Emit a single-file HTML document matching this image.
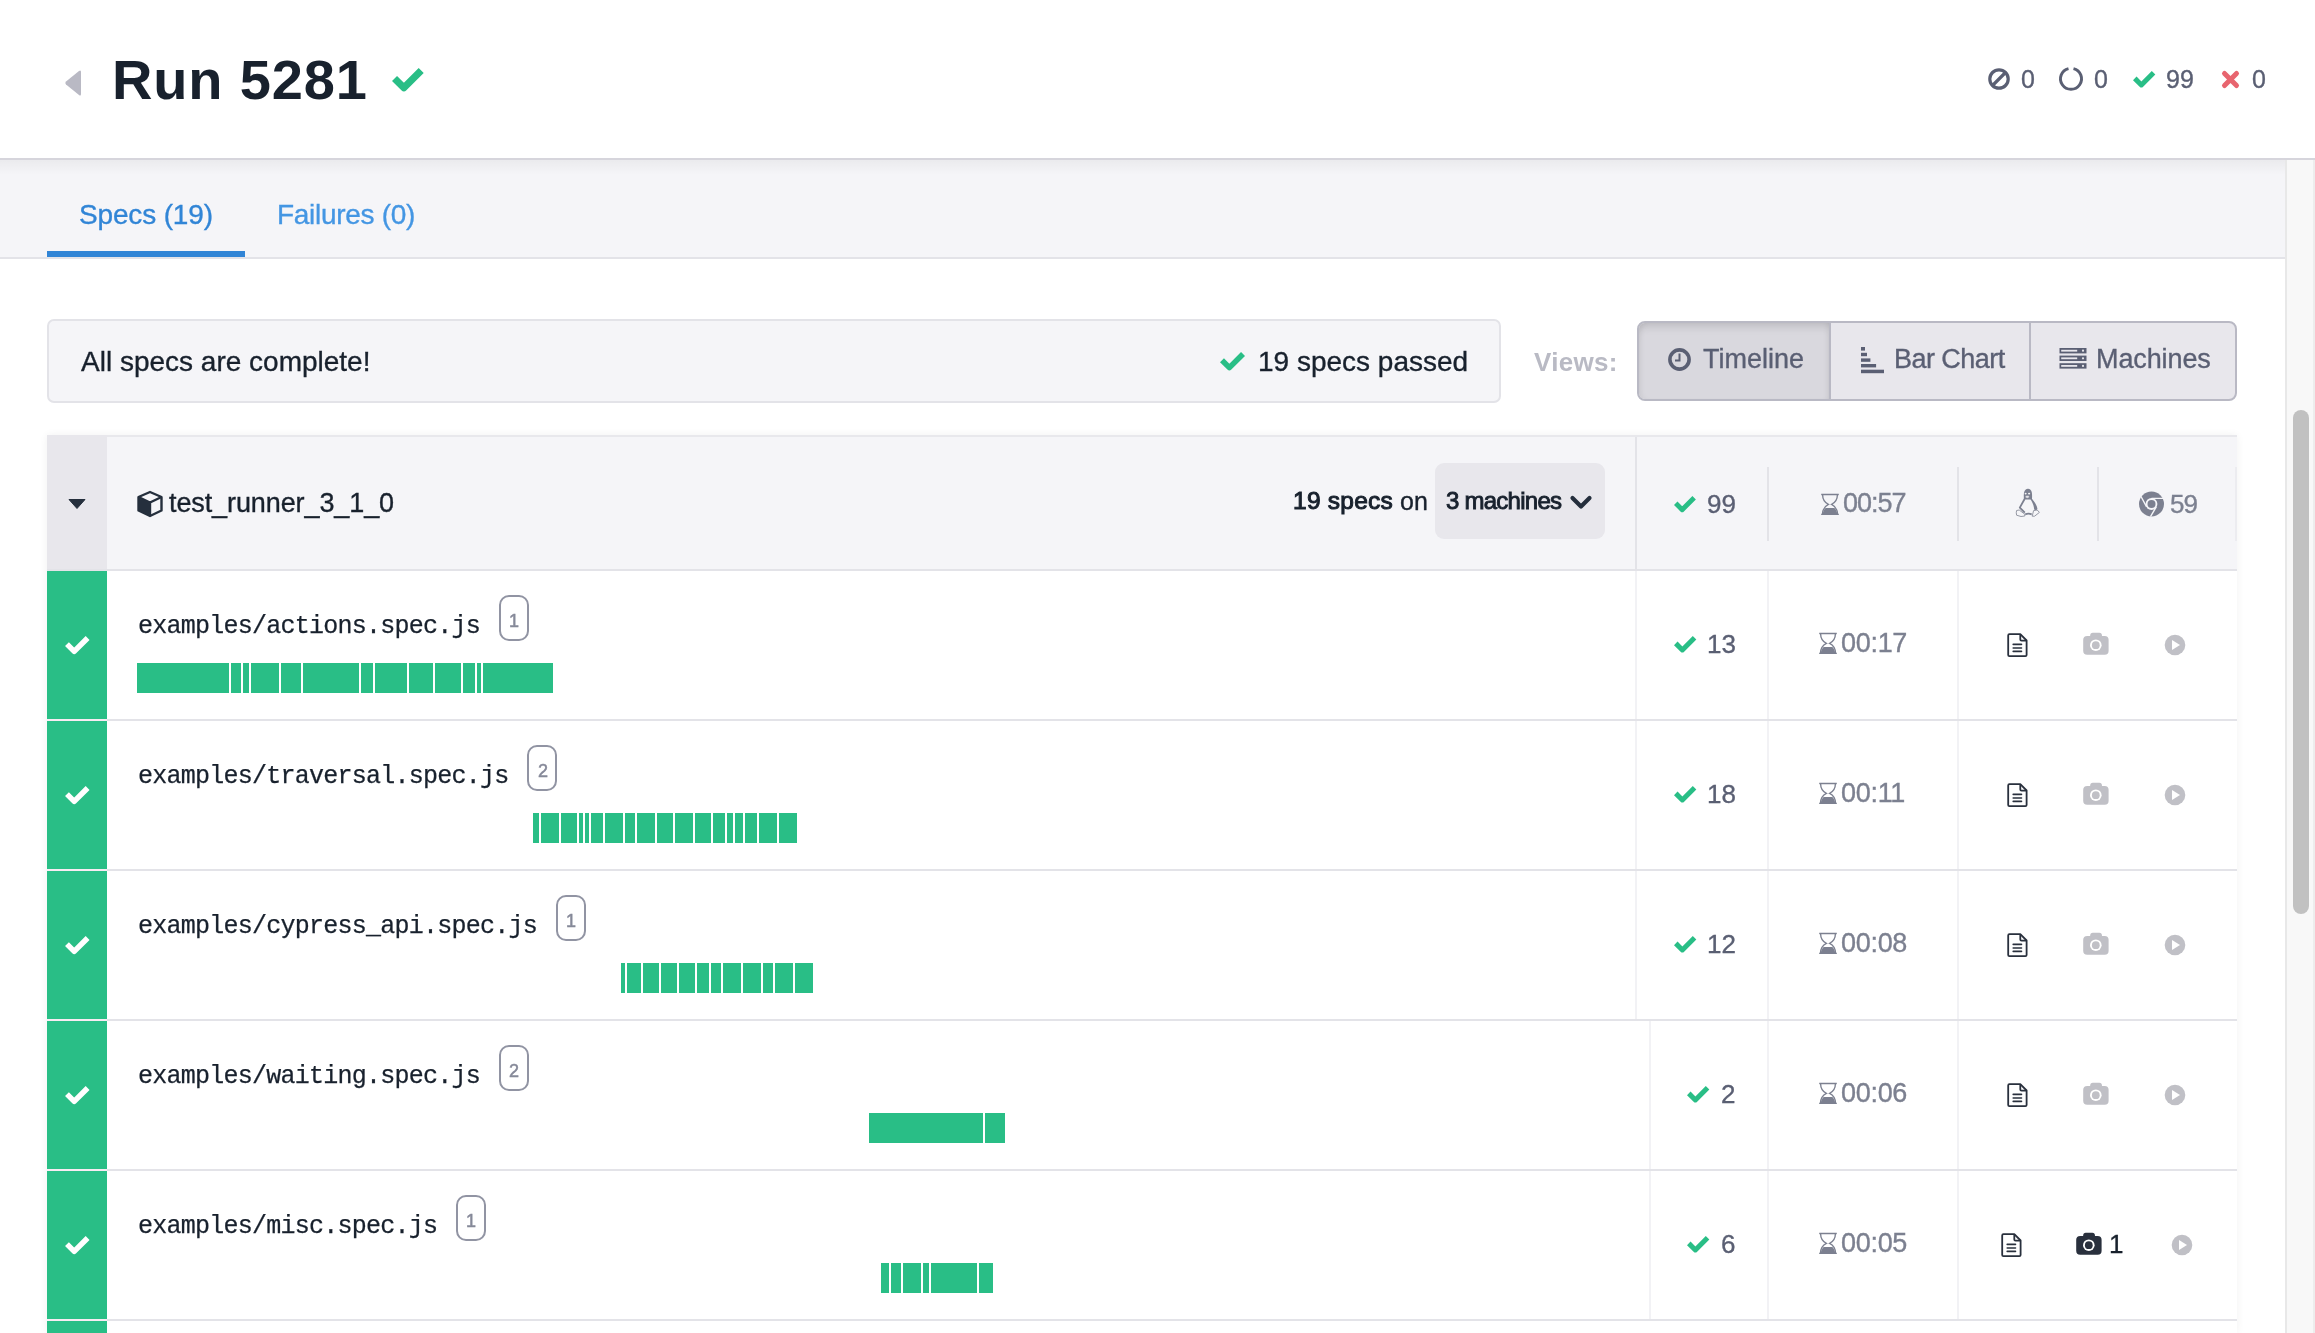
<!DOCTYPE html>
<html><head><meta charset="utf-8"><title>Run 5281</title>
<style>
html,body{margin:0;padding:0;width:2315px;height:1333px;overflow:hidden;background:#fff;}
.a{position:absolute;}
svg.a{overflow:visible;}
.t{position:absolute;white-space:nowrap;line-height:1;will-change:transform;}
.s{font-family:"Liberation Sans", sans-serif;font-weight:400;-webkit-text-stroke:0.35px currentColor;}
.b{font-family:"Liberation Sans", sans-serif;font-weight:700;}
.m{font-family:"Liberation Mono", monospace;font-weight:400;-webkit-text-stroke:0.25px currentColor;}
.badge{border:2px solid #9194a3;border-radius:10px;box-sizing:border-box;}
</style></head><body>
<div class="a" style="left:0px;top:0px;width:2315px;height:158px;background:#fff"></div>
<div class="a" style="left:0px;top:158px;width:2315px;height:2px;background:#d6d5dc"></div>
<svg class="a" style="left:62px;top:66px" width="22" height="34" viewBox="0 0 22 34"><path d="M17 5 Q19 3.5 19 6 L19 28 Q19 30.5 17 29 L4 18.5 Q2.5 17 4 15.5 Z" fill="#b9b9c4"/></svg>
<div class="t b" style="left:112.0px;top:52.4px;font-size:56px;color:#18212d;letter-spacing:0.85px;">Run 5281</div>
<svg class="a" style="left:392px;top:68px" width="32.66" height="24.14" viewBox="0 0 23 17"><path d="M1.77 7.37 L8.37 13.97 L20.57 1.77" fill="none" stroke="#29be86" stroke-width="5" stroke-linecap="butt" stroke-linejoin="round"/></svg>
<svg class="a" style="left:1987px;top:67px" width="24" height="24" viewBox="0 0 24 24"><circle cx="12" cy="12" r="9.2" fill="none" stroke="#5a5f73" stroke-width="3.2"/><path d="M5.5 18.5 L18.5 5.5" stroke="#5a5f73" stroke-width="3.2"/></svg>
<div class="t s" style="left:2020.5px;top:66.8px;font-size:25px;color:#5a5f73;">0</div>
<svg class="a" style="left:2058px;top:66px" width="26" height="26" viewBox="0 0 26 26"><path d="M10.5 2.6 A10.5 10.5 0 1 0 15.5 2.6" fill="none" stroke="#5a5f73" stroke-width="3"/></svg>
<div class="t s" style="left:2093.5px;top:66.8px;font-size:25px;color:#5a5f73;">0</div>
<svg class="a" style="left:2133px;top:71px" width="23.00" height="17.00" viewBox="0 0 23 17"><path d="M1.77 7.37 L8.37 13.97 L20.57 1.77" fill="none" stroke="#29be86" stroke-width="5" stroke-linecap="butt" stroke-linejoin="round"/></svg>
<div class="t s" style="left:2165.5px;top:66.8px;font-size:25px;color:#5a5f73;">99</div>
<svg class="a" style="left:2221px;top:70px" width="19" height="19" viewBox="0 0 19 19"><path d="M3.5 3.5 L15.5 15.5 M15.5 3.5 L3.5 15.5" stroke="#e8656f" stroke-width="5" stroke-linecap="round"/></svg>
<div class="t s" style="left:2252.0px;top:66.8px;font-size:25px;color:#5a5f73;">0</div>
<div class="a" style="left:0px;top:160px;width:2285px;height:97px;background:#f5f5f8"></div>
<div class="a" style="left:0px;top:160px;width:2285px;height:15px;background:linear-gradient(rgba(0,0,0,0.045),rgba(0,0,0,0))"></div>
<div class="a" style="left:0px;top:257px;width:2285px;height:2px;background:#e3e3e8"></div>
<div class="a" style="left:47px;top:251px;width:198px;height:6px;background:#3185d6"></div>
<div class="t s" style="left:78.5px;top:201.2px;font-size:28px;color:#3185d6;letter-spacing:-0.15px;">Specs (19)</div>
<div class="t s" style="left:277.0px;top:201.2px;font-size:28px;color:#4496e3;letter-spacing:-0.3px;">Failures (0)</div>
<div class="a" style="left:2285px;top:160px;width:2px;height:1173px;background:#e8e8e8"></div>
<div class="a" style="left:2287px;top:160px;width:26px;height:1173px;background:#f8f8f8"></div>
<div class="a" style="left:2313px;top:160px;width:2px;height:1173px;background:#ededed"></div>
<div class="a" style="left:2293px;top:410px;width:16px;height:504px;background:#c1c1c1;border-radius:8px"></div>
<div class="a" style="left:47px;top:319px;width:1454px;height:84px;background:#f5f5f8;border:2px solid #e3e3e8;border-radius:7px;box-sizing:border-box"></div>
<div class="t s" style="left:81.0px;top:348.3px;font-size:28px;color:#18212d;">All specs are complete!</div>
<svg class="a" style="left:1220px;top:352px" width="25.76" height="19.04" viewBox="0 0 23 17"><path d="M1.77 7.37 L8.37 13.97 L20.57 1.77" fill="none" stroke="#29be86" stroke-width="5" stroke-linecap="butt" stroke-linejoin="round"/></svg>
<div class="t s" style="left:1258.0px;top:347.7px;font-size:28px;color:#18212d;">19 specs passed</div>
<div class="t b" style="left:1534.0px;top:349.0px;font-size:26px;color:#b9bac4;letter-spacing:0.3px;">Views:</div>
<div class="a" style="left:1637px;top:321px;width:600px;height:80px;background:#e8e7ec;border:2px solid #b9b9c4;border-radius:8px;box-sizing:border-box"></div>
<div class="a" style="left:1639px;top:323px;width:190px;height:76px;background:#d9d8de;border-radius:6px 0 0 6px;box-shadow:inset 0 8px 10px -5px rgba(0,0,0,0.14), inset 5px 0 7px -5px rgba(0,0,0,0.09), inset -5px 0 7px -5px rgba(0,0,0,0.09)"></div>
<div class="a" style="left:1829px;top:323px;width:2px;height:76px;background:#b9b9c4"></div>
<div class="a" style="left:2029px;top:323px;width:2px;height:76px;background:#b9b9c4"></div>
<svg class="a" style="left:1667px;top:347px" width="25" height="25" viewBox="0 0 25 25"><circle cx="12.5" cy="12.5" r="9.6" fill="none" stroke="#5a5f73" stroke-width="3.6"/><path d="M12.5 6.5 V13.5 H8" fill="none" stroke="#5a5f73" stroke-width="2"/></svg>
<div class="t s" style="left:1703.0px;top:346.1px;font-size:27px;color:#5a5f73;">Timeline</div>
<svg class="a" style="left:1860px;top:346px" width="25" height="28" viewBox="0 0 25 28"><g fill="#5a5f73"><rect x="1" y="1" width="4" height="3.6"/><rect x="1" y="6.8" width="6" height="3.4"/><rect x="1" y="12.4" width="9.4" height="3.4"/><rect x="1" y="18" width="15.1" height="3.4"/><rect x="1" y="23.7" width="23" height="3.5"/></g></svg>
<div class="t s" style="left:1894.0px;top:346.1px;font-size:27px;color:#5a5f73;letter-spacing:-0.55px;">Bar Chart</div>
<svg class="a" style="left:2059px;top:347px" width="28" height="23" viewBox="0 0 28 23"><g fill="#5a5f73"><rect x="0.5" y="1" width="27" height="5.4"/><rect x="0.5" y="8.6" width="27" height="5.4"/><rect x="0.5" y="16.2" width="27" height="5.4"/></g><g fill="#e8e7ec"><rect x="2.2" y="2.8" width="16" height="1.8"/><rect x="2.2" y="10.4" width="16" height="1.8"/><rect x="2.2" y="18" width="16" height="1.8"/><circle cx="24" cy="3.7" r="1.1"/><circle cx="24" cy="11.3" r="1.1"/><circle cx="24" cy="18.9" r="1.1"/></g></svg>
<div class="t s" style="left:2096.0px;top:346.1px;font-size:27px;color:#5a5f73;letter-spacing:-0.1px;">Machines</div>
<div class="a" style="left:47px;top:435px;width:2190px;height:898px;background:#fff;box-shadow:0 0 8px rgba(0,0,0,0.06)"></div>
<div class="a" style="left:47px;top:435px;width:2190px;height:136px;background:#f5f5f8"></div>
<div class="a" style="left:107px;top:435px;width:2130px;height:2px;background:#e8e8ec"></div>
<div class="a" style="left:47px;top:569px;width:2190px;height:2px;background:#e3e3e8"></div>
<div class="a" style="left:47px;top:435px;width:60px;height:134px;background:#e8e7ec"></div>
<svg class="a" style="left:68px;top:498px" width="18" height="12" viewBox="0 0 18 12"><path d="M1 1.5 H17 L9 10.5 Z" fill="#252f3d" stroke="#252f3d" stroke-width="1" stroke-linejoin="round"/></svg>
<svg class="a" style="left:136px;top:490px" width="28" height="28" viewBox="0 0 28 28"><path d="M14 2 L25.5 7 V20.5 L14 26 L2.5 20.5 V7 Z" fill="none" stroke="#252f3d" stroke-width="2.4" stroke-linejoin="round"/><path d="M2.5 7 L14 12.5 L25.5 7 M14 12.5 V26" fill="none" stroke="#252f3d" stroke-width="2.4"/><path d="M2.5 7 L14 12.5 V26 L2.5 20.5 Z" fill="#252f3d"/></svg>
<div class="t s" style="left:169.0px;top:490.1px;font-size:27px;color:#18212d;letter-spacing:-0.1px;">test_runner_3_1_0</div>
<div class="t s" style="left:1292.5px;top:489.0px;font-size:24.5px;color:#18212d;letter-spacing:0.25px;-webkit-text-stroke:1.0px #18212d;">19 specs</div>
<div class="t s" style="left:1399.5px;top:488.5px;font-size:25px;color:#18212d;">on</div>
<div class="a" style="left:1435px;top:463px;width:170px;height:76px;background:#e8e7ec;border-radius:9px"></div>
<div class="t s" style="left:1446.0px;top:489.4px;font-size:24px;color:#18212d;letter-spacing:-0.75px;-webkit-text-stroke:0.9px #18212d;">3 machines</div>
<svg class="a" style="left:1569px;top:494px" width="24" height="17" viewBox="0 0 24 17"><path d="M3.5 4 L12 12.5 L20.5 4" fill="none" stroke="#252f3d" stroke-width="4.2" stroke-linecap="round" stroke-linejoin="round"/></svg>
<div class="a" style="left:1635px;top:437px;width:2px;height:132px;background:#e3e3e8"></div>
<svg class="a" style="left:1674px;top:496px" width="22.54" height="16.66" viewBox="0 0 23 17"><path d="M1.77 7.37 L8.37 13.97 L20.57 1.77" fill="none" stroke="#29be86" stroke-width="5" stroke-linecap="butt" stroke-linejoin="round"/></svg>
<div class="t s" style="left:1706.5px;top:491.0px;font-size:26px;color:#5a5f73;">99</div>
<div class="a" style="left:1767px;top:467px;width:2px;height:74px;background:#e3e3e8"></div>
<svg class="a" style="left:1814px;top:488.5px" width="32" height="32" viewBox="0 0 32 32"><path d="M7.2 5.5 H24.8 M7.2 25.4 H24.8" stroke="#7c8090" stroke-width="1.4"/><path d="M8.6 5.8 C8.6 11 10.8 13.6 14.4 15.4 C10.8 17.2 8.6 20 8.4 25.4 M23.4 5.8 C23.4 11 21.2 13.6 17.6 15.4 C21.2 17.2 23.4 20 23.6 25.4" fill="none" stroke="#7c8090" stroke-width="1.35" stroke-linejoin="miter"/><path d="M8.8 25.4 C9 22.4 10 20.4 11.6 18.9 H20.4 C22 20.4 23 22.4 23.2 25.4 Z" fill="#7c8090"/></svg>
<div class="t s" style="left:1842.5px;top:490.1px;font-size:27px;color:#7c8090;letter-spacing:-1.0px;">00:57</div>
<div class="a" style="left:1957px;top:467px;width:2px;height:74px;background:#e3e3e8"></div>
<svg class="a" style="left:2010px;top:485px" width="36" height="36" viewBox="0 0 36 36"><path d="M14 14.5 C13.4 9 13.8 3.8 18 3.8 C22.2 3.8 22.4 9 21.9 14.5 Z" fill="#7c8090"/><ellipse cx="15.6" cy="8.6" rx="1" ry="0.9" fill="#f5f5f8"/><ellipse cx="19.1" cy="8.6" rx="1.1" ry="0.9" fill="#f5f5f8"/><ellipse cx="17.3" cy="11.8" rx="2.1" ry="1.4" fill="#e3e3e8" stroke="#7c8090" stroke-width="0.5"/><path d="M14.6 14 L9.8 22.6 L14.8 27.6" fill="none" stroke="#7c8090" stroke-width="1.8" stroke-linejoin="round"/><path d="M21 12.8 C24 16 27 20 27.4 23.5 C27.4 25.3 25.5 25.5 24.2 24.6 C23.8 20 22.3 17 20.6 14.4 Z" fill="#7c8090"/><path d="M15.2 29.3 Q18.5 28.1 21.7 29.3" fill="none" stroke="#7c8090" stroke-width="1.8"/><path d="M14.8 31 L11 31.5 L6.6 30.2 Q5.9 27.6 6.6 25.5 L9.2 25 L14.8 29.2 Z M22.2 31.2 L24.6 31.2 L29.4 27.4 L27.2 25 L23.6 25.6 Z" fill="none" stroke="#8a8d9b" stroke-width="0.9" stroke-linejoin="round"/></svg>
<div class="a" style="left:2097px;top:467px;width:2px;height:74px;background:#e3e3e8"></div>
<svg class="a" style="left:2138px;top:490px" width="27" height="28" viewBox="0 0 27 28"><circle cx="13.5" cy="14" r="12.5" fill="#7c8090"/><circle cx="13.5" cy="14" r="5.9" fill="#f5f5f8"/><circle cx="13.5" cy="14" r="4.0" fill="#7c8090"/><path d="M13.5 8.4 H25 M8.6 16.8 L3 6.5 M18.3 16.8 L12.5 26.6" stroke="#f5f5f8" stroke-width="1.4"/></svg>
<div class="t s" style="left:2169.5px;top:491.0px;font-size:26px;color:#7c8090;letter-spacing:-1.0px;">59</div>
<div class="a" style="left:2235px;top:467px;width:2px;height:74px;background:#ececf0"></div>
<div class="a" style="left:47px;top:571px;width:60px;height:148px;background:#29be86"></div>
<div class="a" style="left:47px;top:719px;width:60px;height:2px;background:#f8ecf3"></div>
<div class="a" style="left:107px;top:719px;width:2130px;height:2px;background:#e3e3e8"></div>
<svg class="a" style="left:65px;top:636px" width="25.30" height="18.70" viewBox="0 0 23 17"><path d="M1.77 7.37 L8.37 13.97 L20.57 1.77" fill="none" stroke="#fff" stroke-width="5" stroke-linecap="butt" stroke-linejoin="round"/></svg>
<div class="t m" style="left:137.5px;top:614.2px;font-size:25px;color:#18212d;letter-spacing:-0.75px;">examples/actions.spec.js</div>
<div class="a badge" style="left:498.5px;top:595px;width:30px;height:46px;"></div>
<div class="t s" style="left:509.0px;top:611.8px;font-size:18px;color:#868999;-webkit-text-stroke:0.5px #868999;">1</div>
<div class="a" style="left:137px;top:663px;width:92px;height:30px;background:#29be86"></div>
<div class="a" style="left:231px;top:663px;width:10px;height:30px;background:#29be86"></div>
<div class="a" style="left:243px;top:663px;width:6px;height:30px;background:#29be86"></div>
<div class="a" style="left:251px;top:663px;width:28px;height:30px;background:#29be86"></div>
<div class="a" style="left:281px;top:663px;width:20px;height:30px;background:#29be86"></div>
<div class="a" style="left:303px;top:663px;width:56px;height:30px;background:#29be86"></div>
<div class="a" style="left:361px;top:663px;width:12px;height:30px;background:#29be86"></div>
<div class="a" style="left:375px;top:663px;width:32px;height:30px;background:#29be86"></div>
<div class="a" style="left:409px;top:663px;width:24px;height:30px;background:#29be86"></div>
<div class="a" style="left:435px;top:663px;width:26px;height:30px;background:#29be86"></div>
<div class="a" style="left:463px;top:663px;width:12px;height:30px;background:#29be86"></div>
<div class="a" style="left:477px;top:663px;width:4px;height:30px;background:#29be86"></div>
<div class="a" style="left:483px;top:663px;width:70px;height:30px;background:#29be86"></div>
<div class="a" style="left:1635px;top:571px;width:2px;height:148px;background:#f2f2f5"></div>
<div class="a" style="left:1767px;top:571px;width:2px;height:148px;background:#f2f2f5"></div>
<div class="a" style="left:1957px;top:571px;width:2px;height:148px;background:#f2f2f5"></div>
<div class="t s" style="right:579.5px;top:631.0px;font-size:26px;color:#5a5f73">13</div>
<svg class="a" style="left:1674px;top:636px" width="23.00" height="17.00" viewBox="0 0 23 17"><path d="M1.77 7.37 L8.37 13.97 L20.57 1.77" fill="none" stroke="#29be86" stroke-width="5" stroke-linecap="butt" stroke-linejoin="round"/></svg>
<svg class="a" style="left:1812px;top:628px" width="32" height="32" viewBox="0 0 32 32"><path d="M7.2 5.5 H24.8 M7.2 25.4 H24.8" stroke="#7c8090" stroke-width="1.4"/><path d="M8.6 5.8 C8.6 11 10.8 13.6 14.4 15.4 C10.8 17.2 8.6 20 8.4 25.4 M23.4 5.8 C23.4 11 21.2 13.6 17.6 15.4 C21.2 17.2 23.4 20 23.6 25.4" fill="none" stroke="#7c8090" stroke-width="1.35" stroke-linejoin="miter"/><path d="M8.8 25.4 C9 22.4 10 20.4 11.6 18.9 H20.4 C22 20.4 23 22.4 23.2 25.4 Z" fill="#7c8090"/></svg>
<div class="t s" style="left:1840.5px;top:630.1px;font-size:27px;color:#7c8090;letter-spacing:-0.3px;">00:17</div>
<svg class="a" style="left:2006px;top:632px" width="23" height="27" viewBox="0 0 23 27"><path d="M2.2 3.4 Q2.2 2.2 3.4 2.2 H14.3 L20.6 8.5 V23 Q20.6 24.2 19.4 24.2 H3.4 Q2.2 24.2 2.2 23 Z" fill="none" stroke="#29303d" stroke-width="1.8" stroke-linejoin="round"/><path d="M14.3 2.4 V7.5 Q14.3 8.7 15.5 8.7 H20.4" fill="none" stroke="#29303d" stroke-width="1.8"/><path d="M7.2 12.4 H15.5 M7.2 16 H15.5 M7.2 19.4 H15.5" stroke="#29303d" stroke-width="1.6" stroke-linecap="round"/></svg>
<svg class="a" style="left:2083px;top:632px" width="26" height="23" viewBox="0 0 26 23"><path d="M7.2 4.5 V3.3 Q7.2 0.8 9.7 0.8 H16.4 Q18.9 0.8 18.9 3.3 V4.5 Z" fill="#c0c0c6"/><rect x="0.2" y="4" width="25.4" height="18.8" rx="4" fill="#c0c0c6"/><circle cx="12.8" cy="13.2" r="5.8" fill="#fff"/><circle cx="12.8" cy="13.2" r="3.9" fill="#c0c0c6"/></svg>
<svg class="a" style="left:2164px;top:634px" width="22" height="22" viewBox="0 0 22 22"><circle cx="11" cy="11" r="10.3" fill="#c0c0c6"/><path d="M8 6 L16 11 L8 16 Z" fill="#fff"/></svg>
<div class="a" style="left:47px;top:721px;width:60px;height:148px;background:#29be86"></div>
<div class="a" style="left:47px;top:869px;width:60px;height:2px;background:#f8ecf3"></div>
<div class="a" style="left:107px;top:869px;width:2130px;height:2px;background:#e3e3e8"></div>
<svg class="a" style="left:65px;top:786px" width="25.30" height="18.70" viewBox="0 0 23 17"><path d="M1.77 7.37 L8.37 13.97 L20.57 1.77" fill="none" stroke="#fff" stroke-width="5" stroke-linecap="butt" stroke-linejoin="round"/></svg>
<div class="t m" style="left:137.5px;top:764.2px;font-size:25px;color:#18212d;letter-spacing:-0.75px;">examples/traversal.spec.js</div>
<div class="a badge" style="left:527.0px;top:745px;width:30px;height:46px;"></div>
<div class="t s" style="left:537.5px;top:761.8px;font-size:18px;color:#868999;-webkit-text-stroke:0.5px #868999;">2</div>
<div class="a" style="left:533px;top:813px;width:6px;height:30px;background:#29be86"></div>
<div class="a" style="left:541px;top:813px;width:18px;height:30px;background:#29be86"></div>
<div class="a" style="left:561px;top:813px;width:16px;height:30px;background:#29be86"></div>
<div class="a" style="left:579px;top:813px;width:4px;height:30px;background:#29be86"></div>
<div class="a" style="left:585px;top:813px;width:4px;height:30px;background:#29be86"></div>
<div class="a" style="left:591px;top:813px;width:12px;height:30px;background:#29be86"></div>
<div class="a" style="left:605px;top:813px;width:18px;height:30px;background:#29be86"></div>
<div class="a" style="left:625px;top:813px;width:10px;height:30px;background:#29be86"></div>
<div class="a" style="left:637px;top:813px;width:18px;height:30px;background:#29be86"></div>
<div class="a" style="left:657px;top:813px;width:16px;height:30px;background:#29be86"></div>
<div class="a" style="left:675px;top:813px;width:18px;height:30px;background:#29be86"></div>
<div class="a" style="left:695px;top:813px;width:16px;height:30px;background:#29be86"></div>
<div class="a" style="left:713px;top:813px;width:12px;height:30px;background:#29be86"></div>
<div class="a" style="left:727px;top:813px;width:6px;height:30px;background:#29be86"></div>
<div class="a" style="left:735px;top:813px;width:8px;height:30px;background:#29be86"></div>
<div class="a" style="left:745px;top:813px;width:12px;height:30px;background:#29be86"></div>
<div class="a" style="left:759px;top:813px;width:18px;height:30px;background:#29be86"></div>
<div class="a" style="left:779px;top:813px;width:18px;height:30px;background:#29be86"></div>
<div class="a" style="left:1635px;top:721px;width:2px;height:148px;background:#f2f2f5"></div>
<div class="a" style="left:1767px;top:721px;width:2px;height:148px;background:#f2f2f5"></div>
<div class="a" style="left:1957px;top:721px;width:2px;height:148px;background:#f2f2f5"></div>
<div class="t s" style="right:579.5px;top:781.0px;font-size:26px;color:#5a5f73">18</div>
<svg class="a" style="left:1674px;top:786px" width="23.00" height="17.00" viewBox="0 0 23 17"><path d="M1.77 7.37 L8.37 13.97 L20.57 1.77" fill="none" stroke="#29be86" stroke-width="5" stroke-linecap="butt" stroke-linejoin="round"/></svg>
<svg class="a" style="left:1812px;top:778px" width="32" height="32" viewBox="0 0 32 32"><path d="M7.2 5.5 H24.8 M7.2 25.4 H24.8" stroke="#7c8090" stroke-width="1.4"/><path d="M8.6 5.8 C8.6 11 10.8 13.6 14.4 15.4 C10.8 17.2 8.6 20 8.4 25.4 M23.4 5.8 C23.4 11 21.2 13.6 17.6 15.4 C21.2 17.2 23.4 20 23.6 25.4" fill="none" stroke="#7c8090" stroke-width="1.35" stroke-linejoin="miter"/><path d="M8.8 25.4 C9 22.4 10 20.4 11.6 18.9 H20.4 C22 20.4 23 22.4 23.2 25.4 Z" fill="#7c8090"/></svg>
<div class="t s" style="left:1840.5px;top:780.1px;font-size:27px;color:#7c8090;letter-spacing:-0.3px;">00:11</div>
<svg class="a" style="left:2006px;top:782px" width="23" height="27" viewBox="0 0 23 27"><path d="M2.2 3.4 Q2.2 2.2 3.4 2.2 H14.3 L20.6 8.5 V23 Q20.6 24.2 19.4 24.2 H3.4 Q2.2 24.2 2.2 23 Z" fill="none" stroke="#29303d" stroke-width="1.8" stroke-linejoin="round"/><path d="M14.3 2.4 V7.5 Q14.3 8.7 15.5 8.7 H20.4" fill="none" stroke="#29303d" stroke-width="1.8"/><path d="M7.2 12.4 H15.5 M7.2 16 H15.5 M7.2 19.4 H15.5" stroke="#29303d" stroke-width="1.6" stroke-linecap="round"/></svg>
<svg class="a" style="left:2083px;top:782px" width="26" height="23" viewBox="0 0 26 23"><path d="M7.2 4.5 V3.3 Q7.2 0.8 9.7 0.8 H16.4 Q18.9 0.8 18.9 3.3 V4.5 Z" fill="#c0c0c6"/><rect x="0.2" y="4" width="25.4" height="18.8" rx="4" fill="#c0c0c6"/><circle cx="12.8" cy="13.2" r="5.8" fill="#fff"/><circle cx="12.8" cy="13.2" r="3.9" fill="#c0c0c6"/></svg>
<svg class="a" style="left:2164px;top:784px" width="22" height="22" viewBox="0 0 22 22"><circle cx="11" cy="11" r="10.3" fill="#c0c0c6"/><path d="M8 6 L16 11 L8 16 Z" fill="#fff"/></svg>
<div class="a" style="left:47px;top:871px;width:60px;height:148px;background:#29be86"></div>
<div class="a" style="left:47px;top:1019px;width:60px;height:2px;background:#f8ecf3"></div>
<div class="a" style="left:107px;top:1019px;width:2130px;height:2px;background:#e3e3e8"></div>
<svg class="a" style="left:65px;top:936px" width="25.30" height="18.70" viewBox="0 0 23 17"><path d="M1.77 7.37 L8.37 13.97 L20.57 1.77" fill="none" stroke="#fff" stroke-width="5" stroke-linecap="butt" stroke-linejoin="round"/></svg>
<div class="t m" style="left:137.5px;top:914.2px;font-size:25px;color:#18212d;letter-spacing:-0.75px;">examples/cypress_api.spec.js</div>
<div class="a badge" style="left:555.5px;top:895px;width:30px;height:46px;"></div>
<div class="t s" style="left:566.0px;top:911.8px;font-size:18px;color:#868999;-webkit-text-stroke:0.5px #868999;">1</div>
<div class="a" style="left:621px;top:963px;width:4px;height:30px;background:#29be86"></div>
<div class="a" style="left:627px;top:963px;width:14px;height:30px;background:#29be86"></div>
<div class="a" style="left:643px;top:963px;width:16px;height:30px;background:#29be86"></div>
<div class="a" style="left:661px;top:963px;width:16px;height:30px;background:#29be86"></div>
<div class="a" style="left:679px;top:963px;width:16px;height:30px;background:#29be86"></div>
<div class="a" style="left:697px;top:963px;width:12px;height:30px;background:#29be86"></div>
<div class="a" style="left:711px;top:963px;width:10px;height:30px;background:#29be86"></div>
<div class="a" style="left:723px;top:963px;width:18px;height:30px;background:#29be86"></div>
<div class="a" style="left:743px;top:963px;width:18px;height:30px;background:#29be86"></div>
<div class="a" style="left:763px;top:963px;width:10px;height:30px;background:#29be86"></div>
<div class="a" style="left:775px;top:963px;width:18px;height:30px;background:#29be86"></div>
<div class="a" style="left:795px;top:963px;width:18px;height:30px;background:#29be86"></div>
<div class="a" style="left:1635px;top:871px;width:2px;height:148px;background:#f2f2f5"></div>
<div class="a" style="left:1767px;top:871px;width:2px;height:148px;background:#f2f2f5"></div>
<div class="a" style="left:1957px;top:871px;width:2px;height:148px;background:#f2f2f5"></div>
<div class="t s" style="right:579.5px;top:931.0px;font-size:26px;color:#5a5f73">12</div>
<svg class="a" style="left:1674px;top:936px" width="23.00" height="17.00" viewBox="0 0 23 17"><path d="M1.77 7.37 L8.37 13.97 L20.57 1.77" fill="none" stroke="#29be86" stroke-width="5" stroke-linecap="butt" stroke-linejoin="round"/></svg>
<svg class="a" style="left:1812px;top:928px" width="32" height="32" viewBox="0 0 32 32"><path d="M7.2 5.5 H24.8 M7.2 25.4 H24.8" stroke="#7c8090" stroke-width="1.4"/><path d="M8.6 5.8 C8.6 11 10.8 13.6 14.4 15.4 C10.8 17.2 8.6 20 8.4 25.4 M23.4 5.8 C23.4 11 21.2 13.6 17.6 15.4 C21.2 17.2 23.4 20 23.6 25.4" fill="none" stroke="#7c8090" stroke-width="1.35" stroke-linejoin="miter"/><path d="M8.8 25.4 C9 22.4 10 20.4 11.6 18.9 H20.4 C22 20.4 23 22.4 23.2 25.4 Z" fill="#7c8090"/></svg>
<div class="t s" style="left:1840.5px;top:930.1px;font-size:27px;color:#7c8090;letter-spacing:-0.3px;">00:08</div>
<svg class="a" style="left:2006px;top:932px" width="23" height="27" viewBox="0 0 23 27"><path d="M2.2 3.4 Q2.2 2.2 3.4 2.2 H14.3 L20.6 8.5 V23 Q20.6 24.2 19.4 24.2 H3.4 Q2.2 24.2 2.2 23 Z" fill="none" stroke="#29303d" stroke-width="1.8" stroke-linejoin="round"/><path d="M14.3 2.4 V7.5 Q14.3 8.7 15.5 8.7 H20.4" fill="none" stroke="#29303d" stroke-width="1.8"/><path d="M7.2 12.4 H15.5 M7.2 16 H15.5 M7.2 19.4 H15.5" stroke="#29303d" stroke-width="1.6" stroke-linecap="round"/></svg>
<svg class="a" style="left:2083px;top:932px" width="26" height="23" viewBox="0 0 26 23"><path d="M7.2 4.5 V3.3 Q7.2 0.8 9.7 0.8 H16.4 Q18.9 0.8 18.9 3.3 V4.5 Z" fill="#c0c0c6"/><rect x="0.2" y="4" width="25.4" height="18.8" rx="4" fill="#c0c0c6"/><circle cx="12.8" cy="13.2" r="5.8" fill="#fff"/><circle cx="12.8" cy="13.2" r="3.9" fill="#c0c0c6"/></svg>
<svg class="a" style="left:2164px;top:934px" width="22" height="22" viewBox="0 0 22 22"><circle cx="11" cy="11" r="10.3" fill="#c0c0c6"/><path d="M8 6 L16 11 L8 16 Z" fill="#fff"/></svg>
<div class="a" style="left:47px;top:1021px;width:60px;height:148px;background:#29be86"></div>
<div class="a" style="left:47px;top:1169px;width:60px;height:2px;background:#f8ecf3"></div>
<div class="a" style="left:107px;top:1169px;width:2130px;height:2px;background:#e3e3e8"></div>
<svg class="a" style="left:65px;top:1086px" width="25.30" height="18.70" viewBox="0 0 23 17"><path d="M1.77 7.37 L8.37 13.97 L20.57 1.77" fill="none" stroke="#fff" stroke-width="5" stroke-linecap="butt" stroke-linejoin="round"/></svg>
<div class="t m" style="left:137.5px;top:1064.2px;font-size:25px;color:#18212d;letter-spacing:-0.75px;">examples/waiting.spec.js</div>
<div class="a badge" style="left:498.5px;top:1045px;width:30px;height:46px;"></div>
<div class="t s" style="left:509.0px;top:1061.8px;font-size:18px;color:#868999;-webkit-text-stroke:0.5px #868999;">2</div>
<div class="a" style="left:869px;top:1113px;width:114px;height:30px;background:#29be86"></div>
<div class="a" style="left:985px;top:1113px;width:20px;height:30px;background:#29be86"></div>
<div class="a" style="left:1649px;top:1021px;width:2px;height:148px;background:#f2f2f5"></div>
<div class="a" style="left:1767px;top:1021px;width:2px;height:148px;background:#f2f2f5"></div>
<div class="a" style="left:1957px;top:1021px;width:2px;height:148px;background:#f2f2f5"></div>
<div class="t s" style="right:579.5px;top:1081.0px;font-size:26px;color:#5a5f73">2</div>
<svg class="a" style="left:1687px;top:1086px" width="23.00" height="17.00" viewBox="0 0 23 17"><path d="M1.77 7.37 L8.37 13.97 L20.57 1.77" fill="none" stroke="#29be86" stroke-width="5" stroke-linecap="butt" stroke-linejoin="round"/></svg>
<svg class="a" style="left:1812px;top:1078px" width="32" height="32" viewBox="0 0 32 32"><path d="M7.2 5.5 H24.8 M7.2 25.4 H24.8" stroke="#7c8090" stroke-width="1.4"/><path d="M8.6 5.8 C8.6 11 10.8 13.6 14.4 15.4 C10.8 17.2 8.6 20 8.4 25.4 M23.4 5.8 C23.4 11 21.2 13.6 17.6 15.4 C21.2 17.2 23.4 20 23.6 25.4" fill="none" stroke="#7c8090" stroke-width="1.35" stroke-linejoin="miter"/><path d="M8.8 25.4 C9 22.4 10 20.4 11.6 18.9 H20.4 C22 20.4 23 22.4 23.2 25.4 Z" fill="#7c8090"/></svg>
<div class="t s" style="left:1840.5px;top:1080.1px;font-size:27px;color:#7c8090;letter-spacing:-0.3px;">00:06</div>
<svg class="a" style="left:2006px;top:1082px" width="23" height="27" viewBox="0 0 23 27"><path d="M2.2 3.4 Q2.2 2.2 3.4 2.2 H14.3 L20.6 8.5 V23 Q20.6 24.2 19.4 24.2 H3.4 Q2.2 24.2 2.2 23 Z" fill="none" stroke="#29303d" stroke-width="1.8" stroke-linejoin="round"/><path d="M14.3 2.4 V7.5 Q14.3 8.7 15.5 8.7 H20.4" fill="none" stroke="#29303d" stroke-width="1.8"/><path d="M7.2 12.4 H15.5 M7.2 16 H15.5 M7.2 19.4 H15.5" stroke="#29303d" stroke-width="1.6" stroke-linecap="round"/></svg>
<svg class="a" style="left:2083px;top:1082px" width="26" height="23" viewBox="0 0 26 23"><path d="M7.2 4.5 V3.3 Q7.2 0.8 9.7 0.8 H16.4 Q18.9 0.8 18.9 3.3 V4.5 Z" fill="#c0c0c6"/><rect x="0.2" y="4" width="25.4" height="18.8" rx="4" fill="#c0c0c6"/><circle cx="12.8" cy="13.2" r="5.8" fill="#fff"/><circle cx="12.8" cy="13.2" r="3.9" fill="#c0c0c6"/></svg>
<svg class="a" style="left:2164px;top:1084px" width="22" height="22" viewBox="0 0 22 22"><circle cx="11" cy="11" r="10.3" fill="#c0c0c6"/><path d="M8 6 L16 11 L8 16 Z" fill="#fff"/></svg>
<div class="a" style="left:47px;top:1171px;width:60px;height:148px;background:#29be86"></div>
<div class="a" style="left:47px;top:1319px;width:60px;height:2px;background:#f8ecf3"></div>
<div class="a" style="left:107px;top:1319px;width:2130px;height:2px;background:#e3e3e8"></div>
<svg class="a" style="left:65px;top:1236px" width="25.30" height="18.70" viewBox="0 0 23 17"><path d="M1.77 7.37 L8.37 13.97 L20.57 1.77" fill="none" stroke="#fff" stroke-width="5" stroke-linecap="butt" stroke-linejoin="round"/></svg>
<div class="t m" style="left:137.5px;top:1214.2px;font-size:25px;color:#18212d;letter-spacing:-0.75px;">examples/misc.spec.js</div>
<div class="a badge" style="left:455.8px;top:1195px;width:30px;height:46px;"></div>
<div class="t s" style="left:466.2px;top:1211.8px;font-size:18px;color:#868999;-webkit-text-stroke:0.5px #868999;">1</div>
<div class="a" style="left:881px;top:1263px;width:8px;height:30px;background:#29be86"></div>
<div class="a" style="left:891px;top:1263px;width:10px;height:30px;background:#29be86"></div>
<div class="a" style="left:903px;top:1263px;width:18px;height:30px;background:#29be86"></div>
<div class="a" style="left:923px;top:1263px;width:6px;height:30px;background:#29be86"></div>
<div class="a" style="left:931px;top:1263px;width:46px;height:30px;background:#29be86"></div>
<div class="a" style="left:979px;top:1263px;width:14px;height:30px;background:#29be86"></div>
<div class="a" style="left:1649px;top:1171px;width:2px;height:148px;background:#f2f2f5"></div>
<div class="a" style="left:1767px;top:1171px;width:2px;height:148px;background:#f2f2f5"></div>
<div class="a" style="left:1957px;top:1171px;width:2px;height:148px;background:#f2f2f5"></div>
<div class="t s" style="right:579.5px;top:1231.0px;font-size:26px;color:#5a5f73">6</div>
<svg class="a" style="left:1687px;top:1236px" width="23.00" height="17.00" viewBox="0 0 23 17"><path d="M1.77 7.37 L8.37 13.97 L20.57 1.77" fill="none" stroke="#29be86" stroke-width="5" stroke-linecap="butt" stroke-linejoin="round"/></svg>
<svg class="a" style="left:1812px;top:1228px" width="32" height="32" viewBox="0 0 32 32"><path d="M7.2 5.5 H24.8 M7.2 25.4 H24.8" stroke="#7c8090" stroke-width="1.4"/><path d="M8.6 5.8 C8.6 11 10.8 13.6 14.4 15.4 C10.8 17.2 8.6 20 8.4 25.4 M23.4 5.8 C23.4 11 21.2 13.6 17.6 15.4 C21.2 17.2 23.4 20 23.6 25.4" fill="none" stroke="#7c8090" stroke-width="1.35" stroke-linejoin="miter"/><path d="M8.8 25.4 C9 22.4 10 20.4 11.6 18.9 H20.4 C22 20.4 23 22.4 23.2 25.4 Z" fill="#7c8090"/></svg>
<div class="t s" style="left:1840.5px;top:1230.1px;font-size:27px;color:#7c8090;letter-spacing:-0.3px;">00:05</div>
<svg class="a" style="left:1999.5px;top:1232px" width="23" height="27" viewBox="0 0 23 27"><path d="M2.2 3.4 Q2.2 2.2 3.4 2.2 H14.3 L20.6 8.5 V23 Q20.6 24.2 19.4 24.2 H3.4 Q2.2 24.2 2.2 23 Z" fill="none" stroke="#29303d" stroke-width="1.8" stroke-linejoin="round"/><path d="M14.3 2.4 V7.5 Q14.3 8.7 15.5 8.7 H20.4" fill="none" stroke="#29303d" stroke-width="1.8"/><path d="M7.2 12.4 H15.5 M7.2 16 H15.5 M7.2 19.4 H15.5" stroke="#29303d" stroke-width="1.6" stroke-linecap="round"/></svg>
<svg class="a" style="left:2076px;top:1232px" width="26" height="23" viewBox="0 0 26 23"><path d="M7.2 4.5 V3.3 Q7.2 0.8 9.7 0.8 H16.4 Q18.9 0.8 18.9 3.3 V4.5 Z" fill="#29303d"/><rect x="0.2" y="4" width="25.4" height="18.8" rx="4" fill="#29303d"/><circle cx="12.8" cy="13.2" r="5.8" fill="#fff"/><circle cx="12.8" cy="13.2" r="3.9" fill="#29303d"/></svg>
<div class="t s" style="left:2108.5px;top:1231.4px;font-size:26px;color:#18212d;">1</div>
<svg class="a" style="left:2171px;top:1234px" width="22" height="22" viewBox="0 0 22 22"><circle cx="11" cy="11" r="10.3" fill="#c0c0c6"/><path d="M8 6 L16 11 L8 16 Z" fill="#fff"/></svg>
<div class="a" style="left:47px;top:1321px;width:60px;height:12px;background:#29be86"></div>
</body></html>
